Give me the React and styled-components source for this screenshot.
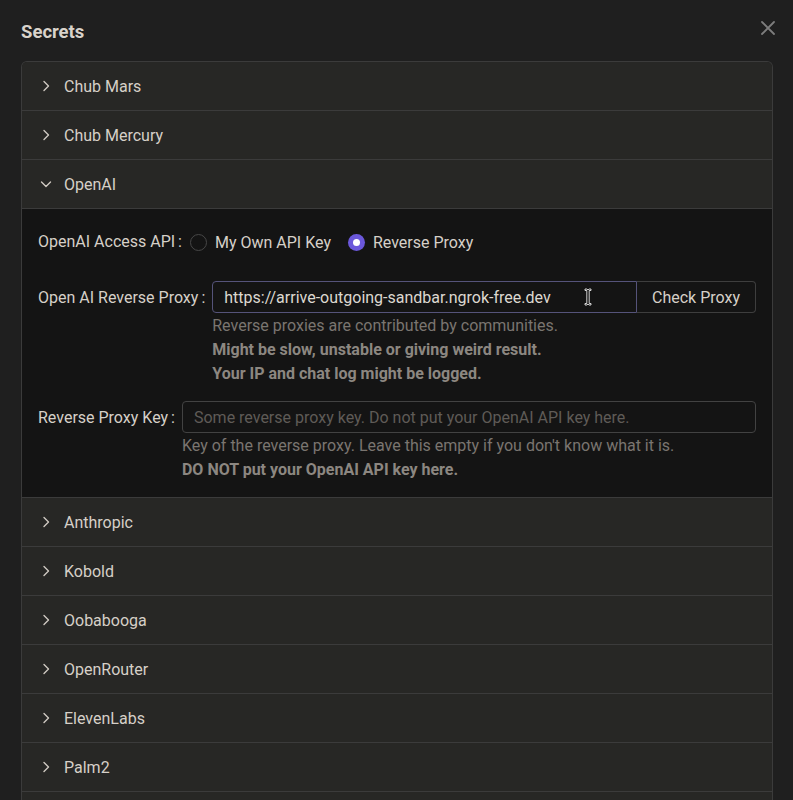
import React, { useState } from "react";
import styled, { createGlobalStyle } from "styled-components";

const Global = createGlobalStyle`
  html, body { margin: 0; padding: 0; background: #1f1f1f; }
  body { font-family: Roboto, "Noto Sans", "Liberation Sans", sans-serif; color: #d6d0c8; }
  * { box-sizing: border-box; }
`;

const Modal = styled.div`
  background: #1f1f1f;
  height: 800px;
  overflow: hidden;
  padding: 18px 20px 0 21px;
  position: relative;
`;

const Header = styled.div`
  display: flex;
  align-items: center;
  height: 27px;
  margin-bottom: 16px;
`;

const Title = styled.h2`
  margin: 0;
  font-size: 18.5px;
  font-weight: 700;
  color: #d9d3cb;
  line-height: 28px;
`;

const CloseButton = styled.button`
  position: absolute;
  top: 19px;
  right: 16px;
  width: 18px;
  height: 18px;
  padding: 0;
  border: none;
  background: transparent;
  display: flex;
  align-items: center;
  justify-content: center;
  cursor: pointer;
`;

const Accordion = styled.div`
  border: 1px solid #3b3b3b;
  border-bottom: none;
  border-radius: 6px 6px 0 0;
  overflow: hidden;
`;

const Item = styled.div`
  border-bottom: 1px solid #3b3b3b;
`;

const ItemHeader = styled.button`
  width: 100%;
  height: 48px;
  display: flex;
  align-items: center;
  gap: 10px;
  padding: 0 0 0 16px;
  border: none;
  background: #272725;
  color: #d6d0c8;
  font-family: inherit;
  font-size: 16px;
  text-align: left;
  cursor: pointer;
`;

const Panel = styled.div`
  background: #141414;
  border-top: 1px solid #3b3b3b;
  padding: 16px;
`;

const Row = styled.div`
  display: flex;
  align-items: ${(p) => (p.$center ? "center" : "flex-start")};
  gap: 7px;
  margin-bottom: ${(p) => p.$mb || 0}px;
  height: ${(p) => (p.$center ? "32px" : "auto")};
`;

const Label = styled.label`
  font-size: 16px;
  line-height: 32px;
  height: 32px;
  transform: translateY(1px);
  color: #d6d0c8;
  white-space: nowrap;
  &::after {
    content: ":";
    margin-left: 3px;
  }
`;

const RadioGroup = styled.div`
  display: flex;
  align-items: center;
  gap: 17px;
  padding-left: 1px;
`;

const RadioOption = styled.label`
  display: flex;
  align-items: center;
  gap: 8px;
  font-size: 16px;
  transform: translateY(1px);
  color: #d6d0c8;
  cursor: pointer;
`;

const RadioDot = styled.span`
  width: 17px;
  height: 17px;
  border-radius: 50%;
  border: ${(p) => (p.$checked ? "none" : "1.5px solid #474747")};
  background: ${(p) => (p.$checked ? "#6b58db" : "transparent")};
  display: flex;
  align-items: center;
  justify-content: center;
  &::after {
    content: "";
    display: ${(p) => (p.$checked ? "block" : "none")};
    width: 7px;
    height: 7px;
    border-radius: 50%;
    background: #ffffff;
  }
`;

const Field = styled.div`
  flex: 1;
  min-width: 0;
  display: flex;
  flex-direction: column;
`;

const InputGroup = styled.div`
  display: flex;
  height: 32px;
`;

const TextInput = styled.input`
  flex: ${(p) => (p.$attached ? "1 1 0" : "none")};
  width: ${(p) => (p.$attached ? "auto" : "100%")};
  height: 32px;
  min-width: 0;
  padding: 0 11px;
  background: #141414;
  border: 1px solid ${(p) => (p.$focused ? "#55537a" : "#424242")};
  border-radius: ${(p) => (p.$attached ? "4px 0 0 4px" : "4px")};
  color: #ddd8d0;
  font-family: inherit;
  font-size: 16px;
  outline: none;
  &::placeholder { color: #5f5b57; }
`;

const AddonButton = styled.button`
  height: 32px;
  padding: 0 15px;
  background: #141414;
  border: 1px solid #3e3e3e;
  border-left: none;
  border-radius: 0 4px 4px 0;
  color: #d6d0c8;
  font-family: inherit;
  font-size: 16px;
  cursor: pointer;
`;

const Help = styled.div`
  font-size: 16px;
  line-height: 24px;
  transform: translateY(1px);
  color: ${(p) => (p.$strong ? "#8c8781" : "#7a7570")};
  font-weight: ${(p) => (p.$strong ? 700 : 400)};
`;

const CursorMark = styled.svg`
  position: absolute;
  left: 584px;
  top: 288px;
  pointer-events: none;
`;

const Chevron = ({ open }) => (
  <svg width="16" height="16" viewBox="0 0 16 16" fill="none" stroke="#cfc9c1" strokeWidth="1.4" strokeLinecap="round" strokeLinejoin="round">
    {open ? <path d="M3.5 6l4.5 4.5L12.5 6" /> : <path d="M6 3.5l4.5 4.5L6 12.5" />}
  </svg>
);

const providers = ["Chub Mars", "Chub Mercury", "OpenAI", "Anthropic", "Kobold", "Oobabooga", "OpenRouter", "ElevenLabs", "Palm2", "Mancer"];

function OpenAIPanel() {
  const [mode, setMode] = useState("proxy");
  return (
    <Panel>
      <Row $center $mb={24}>
        <Label>OpenAI Access API</Label>
        <RadioGroup>
          <RadioOption onClick={() => setMode("own")}>
            <RadioDot $checked={mode === "own"} />
            My Own API Key
          </RadioOption>
          <RadioOption onClick={() => setMode("proxy")}>
            <RadioDot $checked={mode === "proxy"} />
            Reverse Proxy
          </RadioOption>
        </RadioGroup>
      </Row>
      <Row $mb={16}>
        <Label>Open AI Reverse Proxy</Label>
        <Field>
          <InputGroup>
            <TextInput $focused $attached defaultValue="https://arrive-outgoing-sandbar.ngrok-free.dev" />
            <AddonButton>Check Proxy</AddonButton>
          </InputGroup>
          <Help>Reverse proxies are contributed by communities.</Help>
          <Help $strong>Might be slow, unstable or giving weird result.</Help>
          <Help $strong>Your IP and chat log might be logged.</Help>
        </Field>
      </Row>
      <Row>
        <Label>Reverse Proxy Key</Label>
        <Field>
          <TextInput placeholder="Some reverse proxy key. Do not put your OpenAI API key here." />
          <Help>Key of the reverse proxy. Leave this empty if you don't know what it is.</Help>
          <Help $strong>DO NOT put your OpenAI API key here.</Help>
        </Field>
      </Row>
    </Panel>
  );
}

export default function App() {
  const [open, setOpen] = useState("OpenAI");
  return (
    <Modal>
      <Global />
      <Header>
        <Title>Secrets</Title>
      </Header>
      <CloseButton aria-label="Close">
        <svg width="16" height="16" viewBox="0 0 16 16" stroke="#7d7d7d" strokeWidth="1.8" strokeLinecap="round">
          <path d="M2 2l12 12M14 2L2 14" />
        </svg>
      </CloseButton>
      <Accordion>
        {providers.map((name) => (
          <Item key={name}>
            <ItemHeader onClick={() => setOpen(open === name ? null : name)}>
              <Chevron open={open === name} />
              {name}
            </ItemHeader>
            {open === name && name === "OpenAI" && <OpenAIPanel />}
          </Item>
        ))}
      </Accordion>
      <CursorMark width="8" height="18" viewBox="0 0 8 18">
        <path d="M1 1h2l1 1 1-1h2v1.5H5.2v13H7V17H5l-1-1-1 1H1v-1.5h1.8v-13H1z" fill="#111" stroke="#fff" strokeWidth="0.8" />
      </CursorMark>
    </Modal>
  );
}
